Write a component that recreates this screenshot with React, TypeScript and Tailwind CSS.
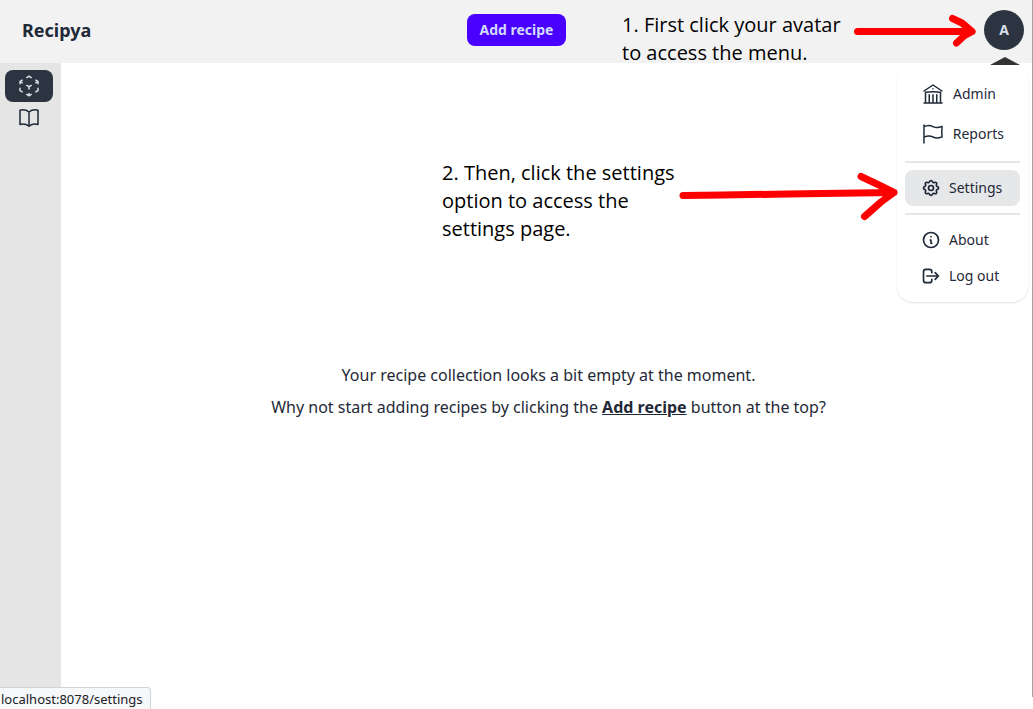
import type { ReactNode } from "react";
import { HiOutlineCog, HiOutlineInformationCircle, HiOutlineLogout } from "react-icons/hi";
import {
  HiOutlineBookOpen,
  HiOutlineBuildingLibrary,
  HiOutlineCubeTransparent,
  HiOutlineFlag,
} from "react-icons/hi2";

function MenuItem({
  href,
  icon,
  label,
  active,
}: {
  href: string;
  icon: ReactNode;
  label: string;
  active?: boolean;
}) {
  return (
    <li>
      <a
        href={href}
        className={`flex items-center gap-2 rounded-lg px-4 py-2 text-sm ${active ? "bg-[#e6e7e9]" : ""}`}
      >
        {icon}
        {label}
      </a>
    </li>
  );
}

function MenuDivider() {
  return <li role="separator" className="my-[7px] h-0.5 bg-[#e5e6e6]" />;
}

function UserMenu() {
  return (
    <ul className="absolute right-[5px] top-[66px] w-[131px] rounded-2xl bg-white p-2 shadow-[0_1px_2px_rgba(0,0,0,0.12)]">
      <MenuItem href="/admin" icon={<HiOutlineBuildingLibrary className="size-6" />} label="Admin" />
      <MenuItem href="/reports" icon={<HiOutlineFlag className="size-6" />} label="Reports" />
      <MenuDivider />
      <MenuItem href="/settings" icon={<HiOutlineCog className="size-5" />} label="Settings" active />
      <MenuDivider />
      <MenuItem href="/about" icon={<HiOutlineInformationCircle className="size-5" />} label="About" />
      <MenuItem href="/logout" icon={<HiOutlineLogout className="size-5" />} label="Log out" />
    </ul>
  );
}

function Header() {
  return (
    <header className="grid h-[63px] grid-cols-[1fr_auto_1fr] items-center bg-[#f2f2f2] px-[9px] pb-1">
      <a href="/" className="justify-self-start pl-[13px] text-lg font-bold">
        Recipya
      </a>
      <button type="button" className="h-8 rounded-lg bg-[#4a00ff] px-[13px] text-sm font-bold text-[#d1dbff]">
        Add recipe
      </button>
      <button
        type="button"
        aria-label="Open user menu"
        className="size-10 justify-self-end rounded-full bg-[#2b3440] text-sm font-bold text-[#d7dde4]"
      >
        A
      </button>
    </header>
  );
}

function Sidebar() {
  return (
    <nav className="w-[61px] shrink-0 bg-[#e5e5e5] px-[5px] pt-[7px]">
      <a
        href="/"
        aria-label="Recipes"
        className="flex h-8 w-12 items-center justify-center rounded-lg bg-[#2b3440] text-[#d7dde4]"
      >
        <HiOutlineCubeTransparent className="size-6" />
      </a>
      <a href="/cookbooks" aria-label="Cookbooks" className="flex h-8 w-12 items-center justify-center">
        <HiOutlineBookOpen className="size-6" />
      </a>
    </nav>
  );
}

// Tutorial notes and arrows drawn on top of the page.
function Annotations() {
  return (
    <div className="pointer-events-none font-['Open_Sans',sans-serif] text-xl leading-7 text-black">
      <p className="absolute right-[171px] top-[11px] w-[240px]">
        1. First click your avatar
        <br />
        to access the menu.
      </p>
      <svg
        className="absolute right-[57px] top-[10px] h-[42px] w-[122px]"
        viewBox="0 0 122 42"
        fill="none"
        stroke="#ff0000"
        strokeWidth="7"
        strokeLinecap="round"
        strokeLinejoin="round"
      >
        <path d="M3.500 21.500H118M98.500 8.500L108 13L118 21.500L110 26L102.500 33" />
      </svg>
      <p className="absolute right-[351px] top-[159px] w-[240px]">
        2. Then, click the settings
        <br />
        option to access the
        <br />
        settings page.
      </p>
      <svg
        className="absolute right-[133px] top-[170px] h-[52px] w-[222px]"
        viewBox="0 0 222 52"
        fill="none"
        stroke="#ff0000"
        strokeWidth="7"
        strokeLinecap="round"
        strokeLinejoin="round"
      >
        <path d="M5 25.500L45 25L110 24L180 23L216 22.500M183 6.500L202 15.500L216 22.500L203 32L186.500 46.500" />
      </svg>
    </div>
  );
}

export default function App() {
  return (
    <div className="relative flex min-h-screen flex-col bg-white font-['Noto_Sans',sans-serif] text-[#1f2937]">
      <Header />
      <div className="flex flex-1">
        <Sidebar />
        <main className="flex flex-1 flex-col items-center justify-center gap-2 pl-[3px] pt-[10px]">
          <p>Your recipe collection looks a bit empty at the moment.</p>
          <p>
            Why not start adding recipes by clicking the{" "}
            <a href="/recipes/add" className="font-bold underline">
              Add recipe
            </a>{" "}
            button at the top?
          </p>
        </main>
      </div>
      <svg className="absolute right-[13px] top-[57px] h-2 w-[30px]" viewBox="0 0 30 8" fill="#333333">
        <path d="M15 0L30 8H0Z" />
      </svg>
      <UserMenu />
      <Annotations />
      <div className="absolute bottom-3 right-0 top-0 w-px bg-[#a3a3a3]" />
      <div className="absolute bottom-0 left-0 rounded-tr border-r border-t border-[#d0d2d4] bg-[#f7f8fa] pl-px pr-[7px] pt-px text-[13px] leading-5 text-[#202124]">
        localhost:8078/settings
      </div>
    </div>
  );
}
